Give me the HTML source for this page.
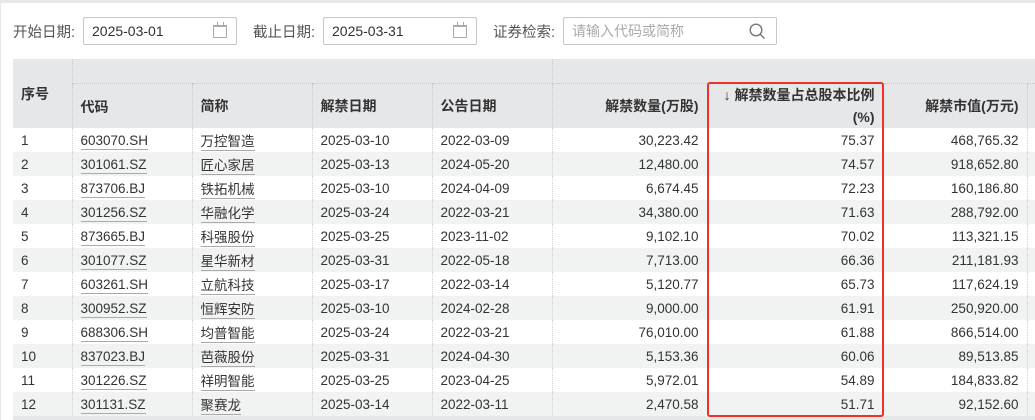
<!DOCTYPE html>
<html><head><meta charset="utf-8"><style>
*{margin:0;padding:0;box-sizing:border-box}
body{width:1035px;height:420px;overflow:hidden;background:#fff;font-family:"Liberation Sans","Noto Sans CJK SC",sans-serif;font-size:13px;color:#333;position:relative}
.top{position:absolute;left:0;top:0;width:1035px;height:3px;background:#e8e8e8}
.lside{position:absolute;left:0;top:0;width:1px;height:420px;background:#e8e8e8}
.lbl{position:absolute;top:21px;color:#555;font-size:14.5px}
.inp{position:absolute;top:17px;height:28px;border:1px solid #c8c8c8;border-radius:2px;padding-left:8px;line-height:26px;font-size:14px;color:#333}
.cal{position:absolute;right:9px;top:7px;width:14px;height:13px;border:1px solid #aaa;border-top-width:2px}
.cal:before{content:"";position:absolute;left:3px;top:-5px;width:1px;height:4px;background:#aaa;box-shadow:6px 0 #aaa}
table{position:absolute;left:13px;top:59px;width:1022px;border-collapse:collapse;table-layout:fixed}
td,th{height:24px;padding:0 8px;white-space:nowrap;font-size:13.5px}
th{background:#e6e7e9;font-weight:bold;text-align:left;border-left:1px dotted #c8c8c8;border-top:1px dotted #c8c8c8;font-size:14px}
td{border-left:1px dotted #d0d0d0}
tr.g td{background:#f1f2f2}
.r{text-align:right}
u{text-decoration:none;border-bottom:1px solid #aaa;padding-bottom:1px}
.red{position:absolute;left:707px;top:82px;width:177px;height:335px;border:2px solid #f0312a;border-radius:3px}
.foot{position:absolute;left:13px;top:416px;width:1022px;height:4px;background:#e6e7e9}
</style></head><body>
<div class="top"></div><div class="lside"></div>
<div class="lbl" style="left:13px">开始日期:</div>
<div class="inp" style="left:83px;width:154px">2025-03-01<div class="cal"></div></div>
<div class="lbl" style="left:253px">截止日期:</div>
<div class="inp" style="left:323px;width:154px">2025-03-31<div class="cal"></div></div>
<div class="lbl" style="left:493px">证券检索:</div>
<div class="inp" style="left:563px;width:214px;color:#aaa">请输入代码或简称
<svg style="position:absolute;right:10px;top:5px" width="17" height="17" viewBox="0 0 17 17"><circle cx="7" cy="7" r="5.8" fill="none" stroke="#777" stroke-width="1.4"/><path d="M11.2 11.2L15.5 15.5" stroke="#777" stroke-width="1.5"/></svg></div>
<table>
<colgroup><col style="width:59px"><col style="width:120px"><col style="width:120px"><col style="width:120px"><col style="width:120px"><col style="width:155px"><col style="width:176px"><col style="width:144px"><col style="width:8px"></colgroup>
<tr><th rowspan="2" style="height:69px;border-left:none;border-top:none;vertical-align:middle">序号</th><th colspan="4" style="height:24px;border-top:none"></th><th colspan="4" style="border-top:none"></th></tr>
<tr><th style="height:45px;padding-top:2px">代码</th><th>简称</th><th>解禁日期</th><th>公告日期</th><th class="r">解禁数量(万股)</th><th class="r" style="line-height:22px">↓ 解禁数量占总股本比例<br>(%)</th><th class="r">解禁市值(万元)</th><th></th></tr>
<tr><td style="border-left:none">1</td><td><u>603070.SH</u></td><td><u>万控智造</u></td><td>2025-03-10</td><td>2022-03-09</td><td class="r">30,223.42</td><td class="r">75.37</td><td class="r">468,765.32</td><td></td></tr>
<tr class="g"><td style="border-left:none">2</td><td><u>301061.SZ</u></td><td><u>匠心家居</u></td><td>2025-03-13</td><td>2024-05-20</td><td class="r">12,480.00</td><td class="r">74.57</td><td class="r">918,652.80</td><td></td></tr>
<tr><td style="border-left:none">3</td><td><u>873706.BJ</u></td><td><u>铁拓机械</u></td><td>2025-03-10</td><td>2024-04-09</td><td class="r">6,674.45</td><td class="r">72.23</td><td class="r">160,186.80</td><td></td></tr>
<tr class="g"><td style="border-left:none">4</td><td><u>301256.SZ</u></td><td><u>华融化学</u></td><td>2025-03-24</td><td>2022-03-21</td><td class="r">34,380.00</td><td class="r">71.63</td><td class="r">288,792.00</td><td></td></tr>
<tr><td style="border-left:none">5</td><td><u>873665.BJ</u></td><td><u>科强股份</u></td><td>2025-03-25</td><td>2023-11-02</td><td class="r">9,102.10</td><td class="r">70.02</td><td class="r">113,321.15</td><td></td></tr>
<tr class="g"><td style="border-left:none">6</td><td><u>301077.SZ</u></td><td><u>星华新材</u></td><td>2025-03-31</td><td>2022-05-18</td><td class="r">7,713.00</td><td class="r">66.36</td><td class="r">211,181.93</td><td></td></tr>
<tr><td style="border-left:none">7</td><td><u>603261.SH</u></td><td><u>立航科技</u></td><td>2025-03-17</td><td>2022-03-14</td><td class="r">5,120.77</td><td class="r">65.73</td><td class="r">117,624.19</td><td></td></tr>
<tr class="g"><td style="border-left:none">8</td><td><u>300952.SZ</u></td><td><u>恒辉安防</u></td><td>2025-03-10</td><td>2024-02-28</td><td class="r">9,000.00</td><td class="r">61.91</td><td class="r">250,920.00</td><td></td></tr>
<tr><td style="border-left:none">9</td><td><u>688306.SH</u></td><td><u>均普智能</u></td><td>2025-03-24</td><td>2022-03-21</td><td class="r">76,010.00</td><td class="r">61.88</td><td class="r">866,514.00</td><td></td></tr>
<tr class="g"><td style="border-left:none">10</td><td><u>837023.BJ</u></td><td><u>芭薇股份</u></td><td>2025-03-31</td><td>2024-04-30</td><td class="r">5,153.36</td><td class="r">60.06</td><td class="r">89,513.85</td><td></td></tr>
<tr><td style="border-left:none">11</td><td><u>301226.SZ</u></td><td><u>祥明智能</u></td><td>2025-03-25</td><td>2023-04-25</td><td class="r">5,972.01</td><td class="r">54.89</td><td class="r">184,833.82</td><td></td></tr>
<tr class="g"><td style="border-left:none">12</td><td><u>301131.SZ</u></td><td><u>聚赛龙</u></td><td>2025-03-14</td><td>2022-03-11</td><td class="r">2,470.58</td><td class="r">51.71</td><td class="r">92,152.60</td><td></td></tr>
</table>
<div class="foot"></div>
<div class="red"></div>
</body></html>
